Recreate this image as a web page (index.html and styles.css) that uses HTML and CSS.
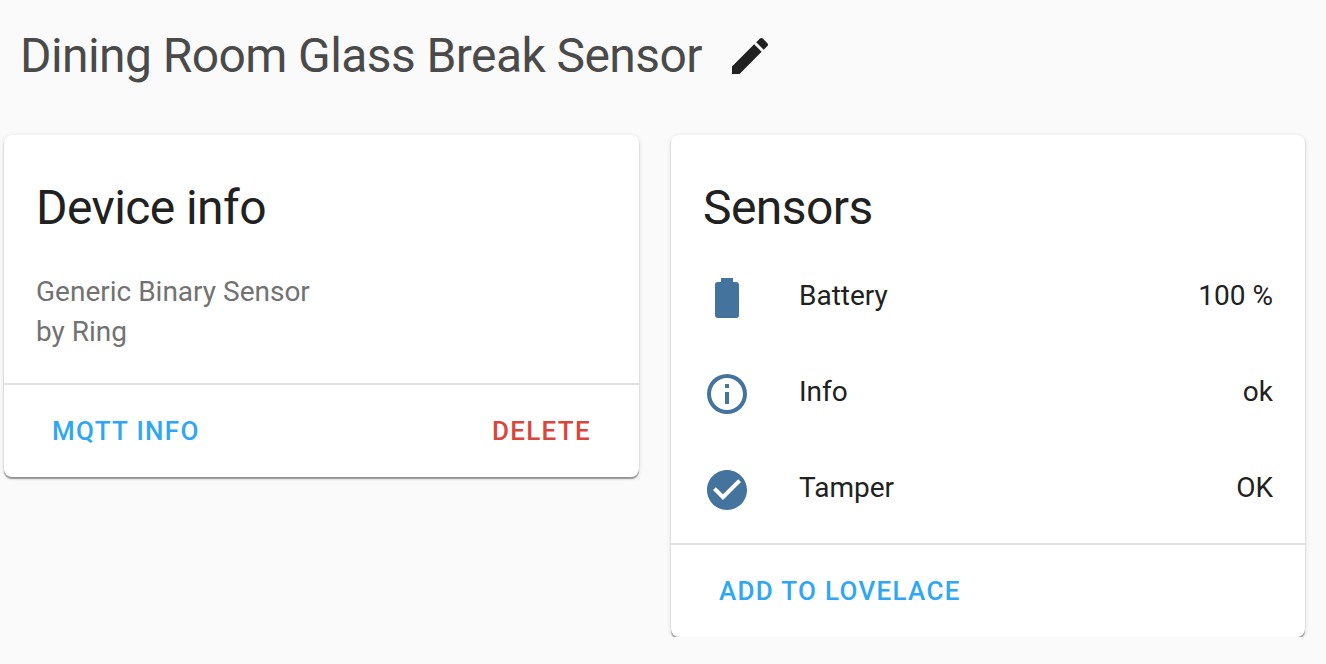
FILE: index.html
```html
<!DOCTYPE html>
<html lang="en">
<head>
    <meta charset="UTF-8">
    <meta name="viewport" content="width=device-width, initial-scale=1.0">
    <title>Dining Room Glass Break Sensor</title>
    <link rel="stylesheet" href="styles.css">
</head>
<body>
    <header class="page-header">
        <h1>Dining Room Glass Break Sensor</h1>
        <svg class="edit-icon" viewBox="0 0 24 24"><path d="M20.71,7.04C21.1,6.65 21.1,6 20.71,5.63L18.37,3.29C18,2.9 17.35,2.9 16.96,3.29L15.12,5.12L18.87,8.87M3,17.25V21H6.75L17.81,9.93L14.06,6.18L3,17.25Z"/></svg>
    </header>
    <main class="columns">
        <section class="card">
            <h2>Device info</h2>
            <div class="device-info">
                <div>Generic Binary Sensor</div>
                <div>by Ring</div>
            </div>
            <div class="card-actions spread">
                <a class="action">MQTT INFO</a>
                <a class="action danger">DELETE</a>
            </div>
        </section>
        <section class="card">
            <h2>Sensors</h2>
            <div class="rows">
                <div class="row">
                    <svg class="row-icon" viewBox="0 0 24 24"><path d="M16.67,4H15V2H9V4H7.33A1.33,1.33 0 0,0 6,5.33V20.67C6,21.4 6.6,22 7.33,22H16.67A1.33,1.33 0 0,0 18,20.67V5.33C18,4.6 17.4,4 16.67,4Z"/></svg>
                    <span class="row-name">Battery</span>
                    <span>100 %</span>
                </div>
                <div class="row">
                    <svg class="row-icon" viewBox="0 0 24 24"><path d="M11,9H13V7H11M12,20C7.59,20 4,16.41 4,12C4,7.59 7.59,4 12,4C16.41,4 20,7.59 20,12C20,16.41 16.41,20 12,20M12,2A10,10 0 0,0 2,12A10,10 0 0,0 12,22A10,10 0 0,0 22,12A10,10 0 0,0 12,2M11,17H13V11H11V17Z"/></svg>
                    <span class="row-name">Info</span>
                    <span>ok</span>
                </div>
                <div class="row">
                    <svg class="row-icon" viewBox="0 0 24 24"><path d="M12 2C6.5 2 2 6.5 2 12S6.5 22 12 22 22 17.5 22 12 17.5 2 12 2M10 17L5 12L6.41 10.59L10 14.17L17.59 6.58L19 8L10 17Z"/></svg>
                    <span class="row-name">Tamper</span>
                    <span>OK</span>
                </div>
            </div>
            <div class="card-actions">
                <a class="action">ADD TO LOVELACE</a>
            </div>
        </section>
    </main>
</body>
</html>
```

FILE: styles.css
```css
body {
    margin: 0;
    background: #fafafa;
    font-family: Roboto, sans-serif;
    color: #212121;
    overflow: hidden;
}

.page-header {
    display: flex;
    align-items: center;
    height: 111px;
    padding-left: 20px;
}

h1 {
    margin: 0;
    font-size: 48px;
    font-weight: 400;
    letter-spacing: -0.58px;
    color: #4a4a4a;
}

.edit-icon {
    width: 48px;
    height: 48px;
    margin-left: 24px;
    fill: #212121;
}

.columns {
    display: grid;
    grid-template-columns: 635px 634px;
    gap: 32px;
    align-items: start;
    padding: 24px 0 0 4px;
}

.card {
    background: #fff;
    border-radius: 8px;
    box-shadow: 0 2px 1px 0 rgba(0, 0, 0, 0.3), 0 2px 2px 0 rgba(0, 0, 0, 0.1), 0 1px 5px 0 rgba(0, 0, 0, 0.12);
}

h2 {
    margin: 0;
    padding: 41px 32px 0;
    font-size: 48px;
    font-weight: 400;
    letter-spacing: -0.576px;
    line-height: 64px;
    color: #212121;
}

.device-info {
    padding: 32px 32px 31px;
    font-size: 28px;
    line-height: 40px;
    color: #727272;
}

.rows {
    padding: 7px 32px 8px;
}

.row {
    display: flex;
    align-items: center;
    height: 96px;
    font-size: 28px;
}

.row-icon {
    width: 48px;
    height: 48px;
    margin-top: 6px;
    fill: #44739e;
}

.row-name {
    flex: 1;
    margin-left: 48px;
}

.card-actions {
    display: flex;
    border-top: 2px solid #e0e0e0;
    padding: 10px 32px;
}

.card-actions.spread {
    justify-content: space-between;
}

.action {
    padding: 16px 16px;
    font-size: 26px;
    font-weight: 500;
    letter-spacing: 1.3px;
    line-height: 40px;
    color: #2fa7f2;
}

.danger {
    color: #d9463b;
}
```
